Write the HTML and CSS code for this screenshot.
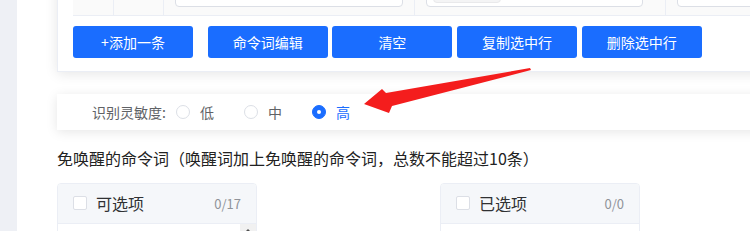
FILE: index.html
```html
<!DOCTYPE html>
<html lang="zh">
<head>
    <meta charset="UTF-8">
    <title>命令词设置</title>
    <link rel="stylesheet" href="styles.css">
</head>
<body>
<div class="layout">
    <div class="side"></div>
    <div class="main">
        <div class="card cmd-card">
            <table class="cmd-table">
                <tr>
                    <td class="c-sel"></td>
                    <td class="c-idx"></td>
                    <td class="c-word"><div class="input"></div></td>
                    <td class="c-tags"><div class="input"><span class="tag"></span></div></td>
                    <td class="c-last"><div class="input"></div></td>
                </tr>
            </table>
            <div class="btn-row">
                <button class="btn">+添加一条</button>
                <button class="btn">命令词编辑</button>
                <button class="btn">清空</button>
                <button class="btn">复制选中行</button>
                <button class="btn">删除选中行</button>
            </div>
        </div>

        <div class="card sens-card">
            <span class="sens-label">识别灵敏度:</span>
            <label class="radio"><span class="radio-dot"></span><span class="radio-text">低</span></label>
            <label class="radio"><span class="radio-dot"></span><span class="radio-text">中</span></label>
            <label class="radio checked"><span class="radio-dot"></span><span class="radio-text">高</span></label>
        </div>

        <h3 class="title">免唤醒的命令词（唤醒词加上免唤醒的命令词，总数不能超过10条）</h3>

        <div class="transfer">
            <div class="panel">
                <div class="panel-head">
                    <span class="check"></span>
                    <span class="panel-name">可选项</span>
                    <span class="panel-count">0/17</span>
                </div>
                <div class="panel-body">
                    <div class="scrollbar"><span class="scroll-up"></span></div>
                </div>
            </div>
            <div class="transfer-gap"></div>
            <div class="panel">
                <div class="panel-head">
                    <span class="check"></span>
                    <span class="panel-name">已选项</span>
                    <span class="panel-count">0/0</span>
                </div>
                <div class="panel-body"></div>
            </div>
        </div>
    </div>
</div>

<svg class="arrow" width="750" height="231" viewBox="0 0 750 231">
    <polygon points="364,104 382,89 386,93 530,68 531,70 392,106 389,113" fill="#f41d1d"/>
</svg>
</body>
</html>
```

FILE: styles.css
```css
* {
    box-sizing: border-box;
}
html, body {
    margin: 0;
    height: 231px;
    overflow: hidden;
    background: #fff;
    font-family: "Noto Sans CJK SC", "Noto Sans", sans-serif;
}
.layout {
    display: flex;
    height: 231px;
}
.side {
    width: 17px;
    flex: none;
    background-color: #eef0f5;
}
.main {
    flex: 1;
    padding-left: 40px;
    min-width: 0;
}
.card {
    background: #fff;
    border: 1px solid #ebeef5;
    box-shadow: 0 2px 12px 0 rgba(0, 0, 0, 0.1);
    margin-right: -80px;
}
.cmd-card {
    margin-top: -49px;
    padding: 15px 15px 13px;
}
.cmd-table {
    border-collapse: collapse;
    width: 900px;
    background: #fafafa;
}
.cmd-table td {
    height: 48px;
    padding: 0 11px;
    border-right: 1px solid #ebeef5;
    border-bottom: 1px solid #ebeef5;
    vertical-align: middle;
}
.cmd-table .c-sel {
    width: 40px;
}
.cmd-table .c-idx {
    width: 50px;
}
.cmd-table .c-word,
.cmd-table .c-tags {
    width: 251px;
}
.input {
    height: 32px;
    background: #fff;
    border: 1px solid #dcdfe6;
    border-radius: 4px;
    position: relative;
}
.c-tags .input {
    margin-right: 11px;
}
.tag {
    position: absolute;
    left: 6px;
    top: 3px;
    width: 68px;
    height: 24px;
    background: #f4f4f5;
    border: 1px solid #e9e9eb;
    border-radius: 4px;
}
.btn-row {
    display: flex;
    gap: 4.7px;
    margin-top: 10px;
}
.btn {
    width: 120px;
    height: 32px;
    border: none;
    border-radius: 3px;
    background-color: #1a6dff;
    color: #fff;
    font-family: inherit;
    font-size: 14px;
    line-height: 32px;
    padding: 0;
}
.btn:first-child {
    margin-right: 10px;
}
.sens-card {
    margin-top: 22px;
    height: 36px;
    border: none;
    padding-left: 35px;
    display: flex;
    align-items: center;
    font-size: 14px;
    color: #606266;
}
.sens-label {
    margin-right: 10px;
}
.radio {
    display: flex;
    align-items: center;
    margin-right: 30px;
}
.radio-dot {
    width: 14px;
    height: 14px;
    border: 1px solid #dcdfe6;
    border-radius: 50%;
    background: #fff;
    margin-right: 10px;
    position: relative;
}
.radio.checked .radio-dot {
    background: #1a6dff;
    border-color: #1a6dff;
}
.radio.checked .radio-dot::after {
    content: "";
    position: absolute;
    left: 4px;
    top: 4px;
    width: 4px;
    height: 4px;
    border-radius: 50%;
    background: #fff;
}
.radio.checked .radio-text {
    color: #1a6dff;
}
.title {
    margin: 16px 0 0;
    font-size: 16px;
    font-weight: normal;
    line-height: 24px;
    color: #222;
}
.transfer {
    display: flex;
    margin-top: 13px;
}
.transfer-gap {
    width: 183px;
}
.panel {
    width: 200px;
    height: 260px;
    border: 1px solid #ebeef5;
    border-radius: 4px;
    overflow: hidden;
}
.panel-head {
    height: 40px;
    background: #f5f7fa;
    border-bottom: 1px solid #ebeef5;
    display: flex;
    align-items: center;
    padding: 0 15px;
}
.check {
    width: 14px;
    height: 14px;
    border: 1px solid #dcdfe6;
    border-radius: 2px;
    background: #fff;
    margin-right: 9px;
}
.panel-name {
    font-size: 16px;
    color: #303133;
    flex: 1;
}
.panel-count {
    font-size: 13px;
    color: #909399;
}
.panel-body {
    height: 220px;
    display: flex;
    justify-content: flex-end;
}
.scrollbar {
    width: 16px;
    background: #f1f1f1;
    position: relative;
}
.scroll-up {
    position: absolute;
    left: 4px;
    top: 5px;
    border-left: 4px solid transparent;
    border-right: 4px solid transparent;
    border-bottom: 4px solid #505050;
}
.arrow {
    position: absolute;
    left: 0;
    top: 0;
    pointer-events: none;
}
```
